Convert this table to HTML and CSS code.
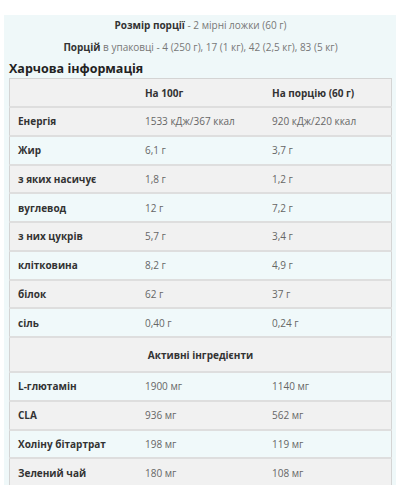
FILE: index.html
```html
<!DOCTYPE html>
<html lang="uk">
<head>
<meta charset="utf-8">
<link rel="stylesheet" href="styles.css">
</head>
<body>
<div class="panel">
  <p class="serving"><b>Розмір порції</b> - 2 мірні ложки (60 г)</p>
  <p class="serving second"><b>Порцій</b> в упаковці - 4 (250 г), 17 (1 кг), 42 (2,5 кг), 83 (5 кг)</p>
  <h2 class="title">Харчова інформація</h2>
  <table class="facts">
    <tr class="grey head"><td></td><td class="h">На 100г</td><td class="h">На порцію (60 г)</td></tr>
    <tr class="grey"><td class="l">Енергія</td><td>1533 кДж/367 ккал</td><td>920 кДж/220 ккал</td></tr>
    <tr class="cyan"><td class="l">Жир</td><td>6,1 г</td><td>3,7 г</td></tr>
    <tr class="grey"><td class="l">з яких насичує</td><td>1,8 г</td><td>1,2 г</td></tr>
    <tr class="cyan"><td class="l">вуглевод</td><td>12 г</td><td>7,2 г</td></tr>
    <tr class="grey"><td class="l">з них цукрів</td><td>5,7 г</td><td>3,4 г</td></tr>
    <tr class="cyan"><td class="l">клітковина</td><td>8,2 г</td><td>4,9 г</td></tr>
    <tr class="grey"><td class="l">білок</td><td>62 г</td><td>37 г</td></tr>
    <tr class="cyan"><td class="l">сіль</td><td>0,40 г</td><td>0,24 г</td></tr>
    <tr class="grey section"><td colspan="3">Активні інгредієнти</td></tr>
    <tr class="cyan"><td class="l">L-глютамін</td><td>1900 мг</td><td>1140 мг</td></tr>
    <tr class="grey"><td class="l">CLA</td><td>936 мг</td><td>562 мг</td></tr>
    <tr class="cyan"><td class="l">Холіну бітартрат</td><td>198 мг</td><td>119 мг</td></tr>
    <tr class="grey"><td class="l">Зелений чай</td><td>180 мг</td><td>108 мг</td></tr>
  </table>
</div>
</body>
</html>
```

FILE: styles.css
```css
html, body {
  margin: 0;
  padding: 0;
  background: #ffffff;
}

body {
  font-family: "Open Sans", "Noto Sans", sans-serif;
  color: #666666;
}

.panel {
  margin: 15px 4px 0 4px;
  padding: 0 4px 0 5px;
  background: #eff8f9;
  height: 470px;
  overflow: hidden;
}

.serving {
  margin: 0;
  text-align: center;
  font-size: 10px;
  line-height: 20px;
  color: #777777;
}

.serving b {
  color: #333333;
  font-weight: 700;
}

.serving.second {
  margin-top: 2px;
}

.title {
  margin: 3px 0 0 0;
  font-size: 12.5px;
  line-height: 18px;
  font-weight: 700;
  color: #222222;
}

.facts {
  width: 100%;
  border-collapse: collapse;
  border: 1px solid #d4d4d4;
  font-size: 10px;
  table-layout: fixed;
}

.facts td {
  height: 26.75px;
  padding: 0 8px;
  vertical-align: middle;
  width: 33.3%;
  color: #666666;
  white-space: nowrap;
}

.facts tr {
  border-top: 2px solid #dedede;
}

.facts tr.head {
  border-top: 1px solid #d4d4d4;
}

.facts tr.head td {
  height: 27px;
}

.facts .h,
.facts .l {
  font-weight: 700;
  color: #333333;
}

.grey {
  background: #f1f1f1;
}

.cyan {
  background: #f0f9fa;
}

.section td {
  height: 33px;
  text-align: center;
  font-weight: 700;
  color: #333333;
}
```
